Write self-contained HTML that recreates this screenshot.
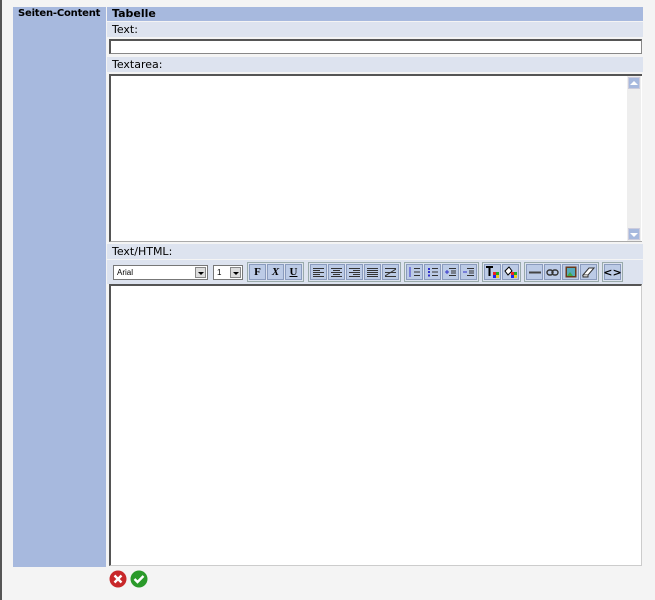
<!DOCTYPE html>
<html><head><meta charset="utf-8"><style>
*{margin:0;padding:0;box-sizing:border-box}
body{width:655px;height:600px;background:#f4f4f4;position:relative;overflow:hidden;font-family:"DejaVu Sans","Liberation Sans",sans-serif;font-size:11px;color:#000}
.a{position:absolute}
.lb{background:#dde3ef;left:107px;width:536px;height:15px;padding-left:5px;line-height:15px}
.in{background:#fff;border:1px solid #888;border-top:2px solid #555;border-left:2px solid #555}
.g{position:absolute;top:262px;height:20px;border:1px solid #9aa;display:flex;padding:1px;gap:1px;background:#dde3ef}
.b{width:17px;height:16px;background:#bccbe6;border:1px solid #8a9bbd;display:flex;align-items:center;justify-content:center;font-family:"Liberation Serif",serif;font-weight:bold;font-size:11px}
.sel{position:absolute;top:265px;height:15px;background:#fff;border:1px solid #777;font-family:"Liberation Sans",sans-serif;font-size:8px;line-height:13px;padding-left:3px}
.sel i{position:absolute;right:1px;top:1px;width:11px;height:11px;background:#ddd;border:1px solid #888}
.sel i:after{content:"";position:absolute;left:2px;top:4px;border:3px solid transparent;border-top:3px solid #000}
</style></head><body>
<div class="a" style="left:0;top:0;width:2px;height:600px;background:#555"></div>
<div class="a" style="left:13px;top:7px;width:93px;height:560px;background:#a7b9de;font-weight:bold;padding:1px 0 0 5px;white-space:nowrap;font-size:10px;letter-spacing:-0.2px">Seiten-Content</div>
<div class="a" style="left:107px;top:7px;width:536px;height:14px;background:#a7b9de;font-weight:bold;padding-left:5px;line-height:14px">Tabelle</div>
<div class="a lb" style="top:22px">Text:</div>
<div class="a in" style="left:109px;top:39px;width:533px;height:15px"></div>
<div class="a lb" style="top:57px">Textarea:</div>
<div class="a in" style="left:109px;top:74px;width:533px;height:168px;border-right:none;border-bottom:1px solid #aaa"></div>
<div class="a" style="left:627px;top:76px;width:14px;height:165px;background:#eee"></div>
<div class="a" style="left:628px;top:77px;width:12px;height:12px;background:#a7b9de;border:1px solid #ccd"><div style="margin:3px auto;width:0;border:4px solid transparent;border-bottom:4px solid #fff;border-top:0"></div></div>
<div class="a" style="left:628px;top:228px;width:12px;height:12px;background:#a7b9de;border:1px solid #ccd"><div style="margin:4px auto;width:0;border:4px solid transparent;border-top:4px solid #fff;border-bottom:0"></div></div>
<div class="a lb" style="top:244px">Text/HTML:</div>
<div class="a" style="left:107px;top:260px;width:536px;height:24px;background:#dde3ef"></div>
<div class="sel" style="left:113px;width:95px">Arial<i></i></div>
<div class="sel" style="left:213px;width:30px">1<i></i></div>
<div class="g" style="left:247px"><div class="b">F</div><div class="b" style="font-style:italic">X</div><div class="b" style="text-decoration:underline">U</div></div>
<div class="g" style="left:308px">
<div class="b"><svg width="11" height="9"><path d="M0 .5h11M0 2.5h7M0 4.5h11M0 6.5h7M0 8.5h11" stroke="#333"/></svg></div>
<div class="b"><svg width="11" height="9"><path d="M0 .5h11M2 2.5h7M0 4.5h11M2 6.5h7M0 8.5h11" stroke="#333"/></svg></div>
<div class="b"><svg width="11" height="9"><path d="M0 .5h11M4 2.5h7M0 4.5h11M4 6.5h7M0 8.5h11" stroke="#333"/></svg></div>
<div class="b"><svg width="11" height="9"><path d="M0 .5h11M0 2.5h11M0 4.5h11M0 6.5h11M0 8.5h11" stroke="#333"/></svg></div>
<div class="b"><svg width="11" height="9"><path d="M0 .5h11M0 4.5h11M0 8.5h11M0 8L11 1" stroke="#333"/></svg></div></div>
<div class="g" style="left:404px">
<div class="b"><svg width="11" height="10"><path d="M5 1.5h6M5 5h6M5 8.5h6" stroke="#333"/><path d="M1 0v10" stroke="#33c"/></svg></div>
<div class="b"><svg width="11" height="10"><path d="M5 1.5h6M5 5h6M5 8.5h6" stroke="#333"/><path d="M1 1h2v2H1zM1 4h2v2H1zM1 7.5h2v2H1z" fill="#33c"/></svg></div>
<div class="b"><svg width="11" height="10"><path d="M4 1.5h7M6 4h5M6 6h5M4 8.5h7" stroke="#333"/><path d="M0 5h4M2 3v4" stroke="#33c"/></svg></div>
<div class="b"><svg width="11" height="10"><path d="M4 1.5h7M6 4h5M6 6h5M4 8.5h7" stroke="#333"/><path d="M0 5h4" stroke="#33c"/></svg></div></div>
<div class="g" style="left:482px">
<div class="b"><svg width="13" height="12"><path d="M0 1h7M3.5 1v9" stroke="#000" stroke-width="2"/><rect x="7" y="6" width="3" height="3" fill="#e22"/><rect x="10" y="6" width="3" height="3" fill="#2a2"/><rect x="7" y="9" width="3" height="3" fill="#22e"/><rect x="10" y="9" width="3" height="3" fill="#ec2"/></svg></div>
<div class="b"><svg width="13" height="12"><path d="M1 5l4-4 3 4-4 4z" fill="#fff" stroke="#000"/><rect x="7" y="6" width="3" height="3" fill="#e22"/><rect x="10" y="6" width="3" height="3" fill="#2a2"/><rect x="7" y="9" width="3" height="3" fill="#22e"/><rect x="10" y="9" width="3" height="3" fill="#ec2"/></svg></div></div>
<div class="g" style="left:524px">
<div class="b"><svg width="12" height="3"><path d="M0 1.5h12" stroke="#444" stroke-width="2"/></svg></div>
<div class="b"><svg width="13" height="7"><rect x="1" y="1" width="6" height="5" rx="2.5" fill="none" stroke="#333" stroke-width="1.4"/><rect x="6" y="1" width="6" height="5" rx="2.5" fill="none" stroke="#333" stroke-width="1.4"/></svg></div>
<div class="b"><svg width="12" height="12"><rect x=".5" y=".5" width="11" height="11" fill="#6a3a1a"/><rect x="2" y="2" width="8" height="8" fill="#5ab"/><path d="M2 10l3-4 3 4z" fill="#4a4"/></svg></div>
<div class="b"><svg width="13" height="11"><path d="M1 8l6-7h5l-6 7z" fill="#fff" stroke="#333"/><path d="M1 8v2h5l0-2" fill="#ccc" stroke="#333"/></svg></div></div>
<div class="g" style="left:602px"><div class="b" style="font-family:'DejaVu Sans';font-size:11px">&lt;&gt;</div></div>
<div class="a in" style="left:109px;top:284px;width:533px;height:282px;border-right:1px solid #ccc;border-bottom:1px solid #ccc"></div>
<svg class="a" style="left:109px;top:570px" width="40" height="18"><circle cx="9" cy="9" r="8.5" fill="#c8282a"/><path d="M5.5 5.5l7 7M12.5 5.5l-7 7" stroke="#fff" stroke-width="2.4"/><circle cx="30" cy="9" r="8.5" fill="#2a9a2a"/><path d="M25.5 9l3 3 6-6" stroke="#fff" stroke-width="2.4" fill="none"/></svg>
</body></html>
